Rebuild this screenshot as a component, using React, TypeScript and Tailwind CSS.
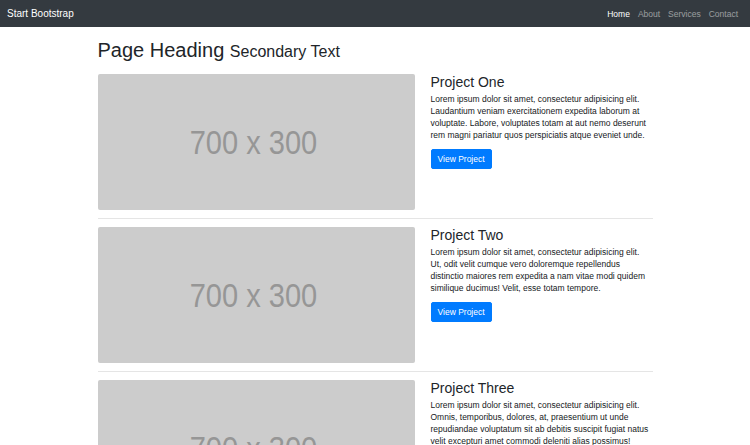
const projects = [
  {
    title: "Project One",
    text: "Lorem ipsum dolor sit amet, consectetur adipisicing elit. Laudantium veniam exercitationem expedita laborum at voluptate. Labore, voluptates totam at aut nemo deserunt rem magni pariatur quos perspiciatis atque eveniet unde.",
  },
  {
    title: "Project Two",
    text: "Lorem ipsum dolor sit amet, consectetur adipisicing elit. Ut, odit velit cumque vero doloremque repellendus distinctio maiores rem expedita a nam vitae modi quidem similique ducimus! Velit, esse totam tempore.",
  },
  {
    title: "Project Three",
    text: "Lorem ipsum dolor sit amet, consectetur adipisicing elit. Omnis, temporibus, dolores, at, praesentium ut unde repudiandae voluptatum sit ab debitis suscipit fugiat natus velit excepturi amet commodi deleniti alias possimus!",
  },
];

function Navbar() {
  return (
    <nav className="h-[27px] bg-[#343a40] flex items-center justify-between pl-[7px] pr-[8px]">
      <a className="text-[10px] text-white leading-[15px]">Start Bootstrap</a>
      <ul className="flex text-[8.5px] leading-[12px]">
        <li className="px-[4px] text-white">Home</li>
        <li className="px-[4px] text-white/50">About</li>
        <li className="px-[4px] text-white/50">Services</li>
        <li className="px-[4px] text-white/50">Contact</li>
      </ul>
    </nav>
  );
}

function Project({ title, text, last }: { title: string; text: string; last: boolean }) {
  return (
    <>
      <div className="grid grid-cols-[317px_1fr] gap-x-[16px]">
        <div className="h-[136px] bg-[#cccccc] rounded-[2px] flex items-center justify-center pr-[6px] overflow-hidden">
          <span className="text-[33px] leading-none text-[#969696] scale-x-[0.88]">700 x 300</span>
        </div>
        <div>
          <h3 className="text-[14px] leading-[16px] font-medium mb-[3px]">{title}</h3>
          <p className="text-[8.5px] leading-[12px] mb-[8px] text-[#16191c]">{text}</p>
          <button className="block bg-[#007bff] text-white text-[8.5px] leading-[12px] px-[6px] py-[3px] border border-[#007bff] rounded-[2px]">
            View Project
          </button>
        </div>
      </div>
      {!last && <hr className="my-[8px] border-t border-black/10" />}
    </>
  );
}

export default function App() {
  return (
    <div className="h-[445px] overflow-hidden bg-white text-[#212529] font-['Liberation_Sans',Arial,sans-serif]">
      <Navbar />
      <div className="w-[555px] mx-auto">
        <h1 className="text-[20px] leading-[24px] font-medium mt-[11px] mb-[10px]">
          Page Heading <small className="text-[16px] font-normal">Secondary Text</small>
        </h1>
        {projects.map((p, i) => (
          <Project key={p.title} title={p.title} text={p.text} last={i === projects.length - 1} />
        ))}
      </div>
    </div>
  );
}
